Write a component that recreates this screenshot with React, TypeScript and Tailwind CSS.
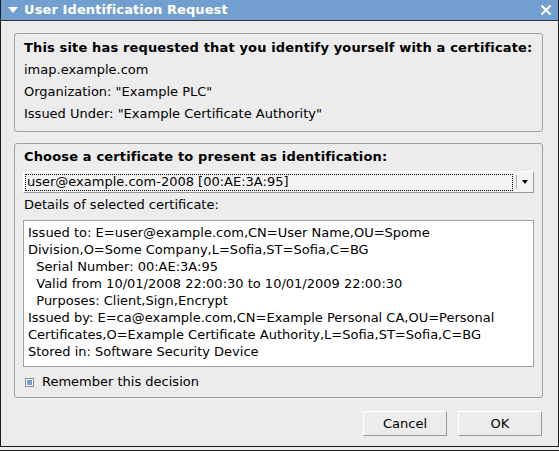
import React, { useState } from 'react';

const detailLines = [
  'Issued to: E=user@example.com,CN=User Name,OU=Spome',
  'Division,O=Some Company,L=Sofia,ST=Sofia,C=BG',
  '  Serial Number: 00:AE:3A:95',
  '  Valid from 10/01/2008 22:00:30 to 10/01/2009 22:00:30',
  '  Purposes: Client,Sign,Encrypt',
  'Issued by: E=ca@example.com,CN=Example Personal CA,OU=Personal',
  'Certificates,O=Example Certificate Authority,L=Sofia,ST=Sofia,C=BG',
  'Stored in: Software Security Device',
];

const App: React.FC = () => {
  const [remember, setRemember] = useState(true);

  return (
    <div className="w-[559px] h-[451px] bg-[#ececec] text-[13px] text-black font-['DejaVu_Sans',sans-serif] overflow-hidden">
      <div className="flex flex-col h-[447px] border-x border-b border-[#1a1a1a]">
        {/* Title bar */}
        <div className="flex items-center h-[21px] bg-[#729fcf] border-b border-[#2e3436] pl-[7px] pr-[6px] text-white">
          <svg width="10" height="10" viewBox="0 0 10 10" className="mr-[6px]">
            <path d="M0 2 L10 2 L5 8 Z" fill="white" />
          </svg>
          <span className="font-bold text-[13px] tracking-[0.1px]">User Identification Request</span>
          <svg width="12" height="12" viewBox="0 0 12 12" className="ml-auto">
            <path d="M1.5 1.5 L10.5 10.5 M10.5 1.5 L1.5 10.5" stroke="white" strokeWidth="2.2" />
          </svg>
        </div>

        <div className="flex flex-col pl-[13px] pr-[15px] pt-[12px]">
          {/* Site info group */}
          <div className="flex flex-col h-[99px] border border-[#a0a0a0] rounded-[3px] px-[9px] pt-[3px]">
            <div className="h-[22px] leading-[22px] font-bold tracking-[0.15px] whitespace-nowrap">This site has requested that you identify yourself with a certificate:</div>
            <div className="h-[22px] leading-[22px]">imap.example.com</div>
            <div className="h-[22px] leading-[22px]">Organization: "Example PLC"</div>
            <div className="h-[22px] leading-[22px]">Issued Under: "Example Certificate Authority"</div>
          </div>

          {/* Certificate group */}
          <div className="flex flex-col mt-[11px] h-[255px] border border-[#a0a0a0] rounded-[3px] px-[8px] pt-[2px]">
            <div className="h-[22px] leading-[22px] font-bold tracking-[0.15px] pl-[1px]">Choose a certificate to present as identification:</div>
            <div className="flex items-center mt-[3px] h-[22px] bg-[#f4f4f4] border-t border-l border-white border-r border-b border-r-[#9a9a9a] border-b-[#9a9a9a]">
              <div className="flex items-center flex-1 h-[17px] ml-[1px] border border-dotted border-black pl-[1px]">
                user@example.com-2008 [00:AE:3A:95]
              </div>
              <div className="w-px h-[14px] bg-[#b0b0b0] ml-[3px]" />
              <div className="flex items-center justify-center w-[16px]">
                <svg width="6" height="4" viewBox="0 0 6 4">
                  <path d="M0 0 L6 0 L3 4 Z" fill="black" />
                </svg>
              </div>
            </div>
            <div className="h-[22px] leading-[22px] mt-px pl-[1px]">Details of selected certificate:</div>
            <div className="flex flex-col mt-[4px] h-[147px] bg-white border border-[#a0a0a0] pl-[4px] pt-[3px]">
              {detailLines.map((line, i) => (
                <div key={i} className="h-[17px] leading-[17px] whitespace-pre">{line}</div>
              ))}
            </div>
            <label className="flex items-center h-[22px] mt-[4px] pl-[2px] cursor-pointer" onClick={() => setRemember(!remember)}>
              <span className="flex items-center justify-center w-[9px] h-[9px] border border-[#8a8a8a] bg-white mr-[8px]">
                {remember && <span className="w-[5px] h-[5px] bg-[#729fcf]" />}
              </span>
              Remember this decision
            </label>
          </div>

          {/* Buttons */}
          <div className="flex justify-end gap-[11px] mt-[13px] pr-px">
            <button className="w-[84px] h-[25px] bg-[#ececec] border-t border-l border-white border-r border-b border-r-[#9a9a9a] border-b-[#9a9a9a]">Cancel</button>
            <button className="w-[84px] h-[25px] bg-[#ececec] border-t border-l border-white border-r border-b border-r-[#9a9a9a] border-b-[#9a9a9a]">OK</button>
          </div>
        </div>
      </div>
      <div className="h-[4px] border-b border-[#1a1a1a]" />
    </div>
  );
};

export default App;
